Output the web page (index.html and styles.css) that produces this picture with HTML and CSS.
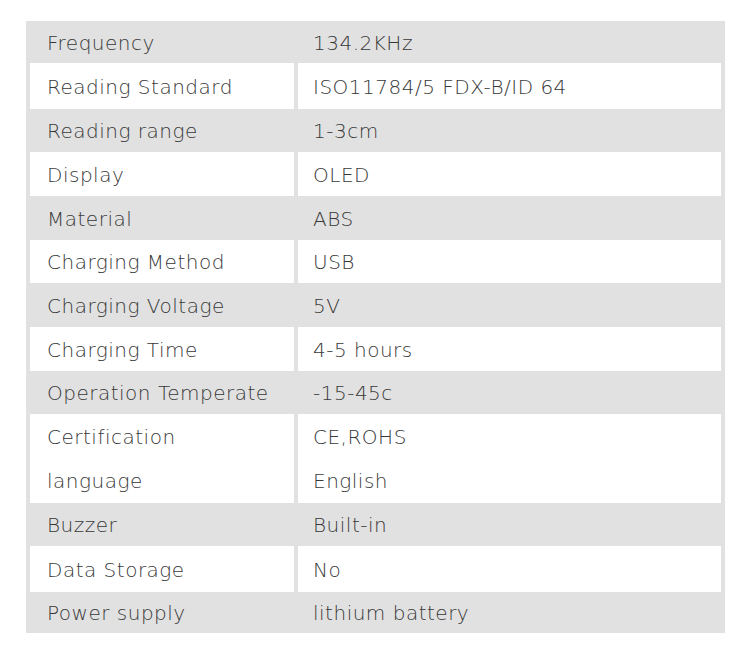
FILE: index.html
```html
<!DOCTYPE html>
<html>
<head>
<meta charset="utf-8">
<link rel="stylesheet" href="styles.css">
</head>
<body>
<div class="spec">
  <div class="row"><div class="cell">Frequency</div><div class="cell">134.2KHz</div></div>
  <div class="row light"><div class="cell">Reading Standard</div><div class="cell">ISO11784/5 FDX-B/ID 64</div></div>
  <div class="row"><div class="cell">Reading range</div><div class="cell">1-3cm</div></div>
  <div class="row light"><div class="cell">Display</div><div class="cell">OLED</div></div>
  <div class="row"><div class="cell">Material</div><div class="cell">ABS</div></div>
  <div class="row light"><div class="cell">Charging Method</div><div class="cell">USB</div></div>
  <div class="row"><div class="cell">Charging Voltage</div><div class="cell">5V</div></div>
  <div class="row light"><div class="cell">Charging Time</div><div class="cell">4-5 hours</div></div>
  <div class="row"><div class="cell">Operation Temperate</div><div class="cell">-15-45c</div></div>
  <div class="row light"><div class="cell">Certification</div><div class="cell">CE,ROHS</div></div>
  <div class="row light"><div class="cell">language</div><div class="cell">English</div></div>
  <div class="row"><div class="cell">Buzzer</div><div class="cell">Built-in</div></div>
  <div class="row light"><div class="cell">Data Storage</div><div class="cell">No</div></div>
  <div class="row"><div class="cell">Power supply</div><div class="cell">lithium battery</div></div>
</div>
</body>
</html>
```
FILE: styles.css
```css
html, body {
  margin: 0;
  padding: 0;
  background: #ffffff;
}

body {
  font-family: "DejaVu Sans", "Liberation Sans", sans-serif;
  font-weight: 300;
  font-size: 20px;
  color: #383838;
}

.spec {
  margin: 21px 0 0 26px;
  width: 699px;
  box-sizing: border-box;
  padding: 0 4px;
  background: #e1e1e1;
  display: grid;
  grid-template-rows: 42px 46px 43px 44px 44px 43px 44px 44px 43px 44px 45px 43px 46px 41px;
}

.row {
  display: grid;
  grid-template-columns: 264px 423px;
  column-gap: 4px;
}

.cell {
  display: flex;
  align-items: center;
  padding-left: 17px;
  padding-top: 1px;
  white-space: nowrap;
  letter-spacing: 0.5px;
}

.cell + .cell {
  padding-left: 15px;
}

.row.light .cell {
  background: #ffffff;
}
```
